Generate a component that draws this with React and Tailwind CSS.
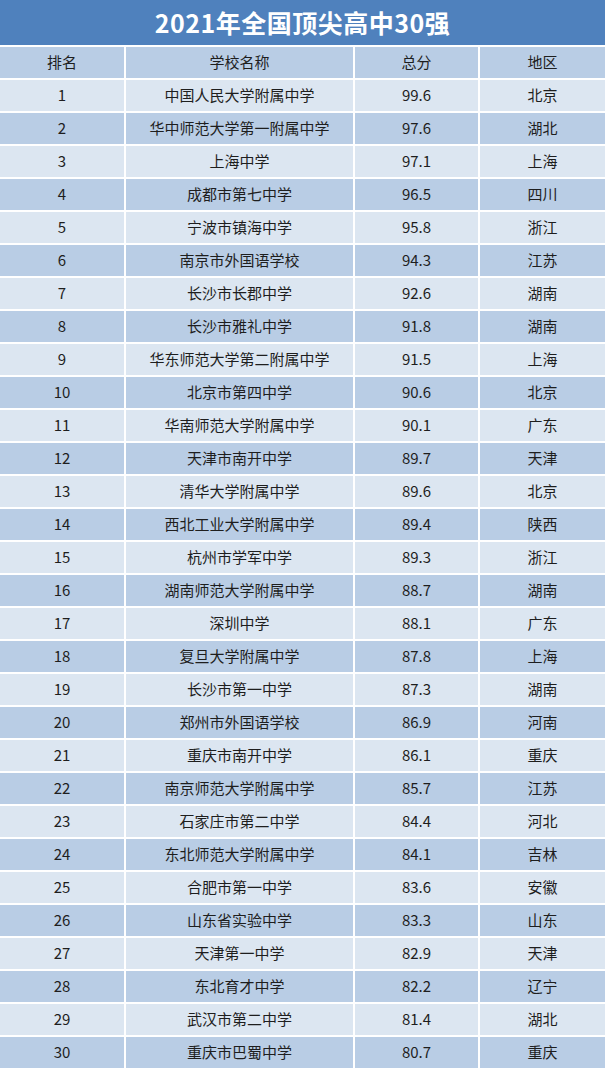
import React from 'react'

const rows = [
  ['1', '中国人民大学附属中学', '99.6', '北京'],
  ['2', '华中师范大学第一附属中学', '97.6', '湖北'],
  ['3', '上海中学', '97.1', '上海'],
  ['4', '成都市第七中学', '96.5', '四川'],
  ['5', '宁波市镇海中学', '95.8', '浙江'],
  ['6', '南京市外国语学校', '94.3', '江苏'],
  ['7', '长沙市长郡中学', '92.6', '湖南'],
  ['8', '长沙市雅礼中学', '91.8', '湖南'],
  ['9', '华东师范大学第二附属中学', '91.5', '上海'],
  ['10', '北京市第四中学', '90.6', '北京'],
  ['11', '华南师范大学附属中学', '90.1', '广东'],
  ['12', '天津市南开中学', '89.7', '天津'],
  ['13', '清华大学附属中学', '89.6', '北京'],
  ['14', '西北工业大学附属中学', '89.4', '陕西'],
  ['15', '杭州市学军中学', '89.3', '浙江'],
  ['16', '湖南师范大学附属中学', '88.7', '湖南'],
  ['17', '深圳中学', '88.1', '广东'],
  ['18', '复旦大学附属中学', '87.8', '上海'],
  ['19', '长沙市第一中学', '87.3', '湖南'],
  ['20', '郑州市外国语学校', '86.9', '河南'],
  ['21', '重庆市南开中学', '86.1', '重庆'],
  ['22', '南京师范大学附属中学', '85.7', '江苏'],
  ['23', '石家庄市第二中学', '84.4', '河北'],
  ['24', '东北师范大学附属中学', '84.1', '吉林'],
  ['25', '合肥市第一中学', '83.6', '安徽'],
  ['26', '山东省实验中学', '83.3', '山东'],
  ['27', '天津第一中学', '82.9', '天津'],
  ['28', '东北育才中学', '82.2', '辽宁'],
  ['29', '武汉市第二中学', '81.4', '湖北'],
  ['30', '重庆市巴蜀中学', '80.7', '重庆'],
]

// one table row: four cells on a white grid
const Row = ({ cells, bg }) => (
  <div className="grid grid-cols-[124px_227px_123px_1fr] gap-x-[2px]">
    {cells.map((c, i) => (
      <div key={i} className={`h-[31px] flex items-center justify-center text-[15px] text-[#1e1e1e] ${bg}`}>
        {c}
      </div>
    ))}
  </div>
)

const App = () => {
  return (
    <div className="w-[605px] h-[1070px] bg-white overflow-hidden" style={{ fontFamily: '"Noto Sans CJK SC", "Noto Sans", sans-serif' }}>
      <div className="h-[45px] bg-[#4f81bd] flex items-center justify-center">
        <h1 className="text-white font-bold text-[25px] tracking-[0.5px]">2021年全国顶尖高中30强</h1>
      </div>
      <div className="flex flex-col gap-y-[2px] pt-[2px]">
        <Row cells={['排名', '学校名称', '总分', '地区']} bg="bg-[#b9cde5]" />
        {rows.map((r, i) => (
          <Row key={r[0]} cells={r} bg={i % 2 === 0 ? 'bg-[#dce6f1]' : 'bg-[#b9cde5]'} />
        ))}
      </div>
    </div>
  )
}

export default App
